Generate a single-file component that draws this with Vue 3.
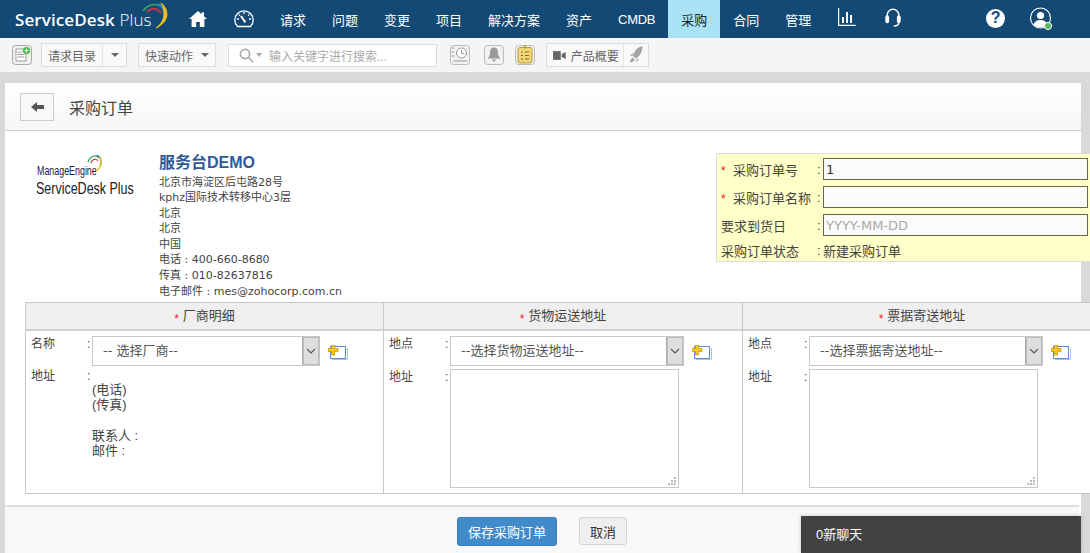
<script setup>
const navItems = ['请求','问题','变更','项目','解决方案','资产','CMDB','采购','合同','管理']
const addressLines = ['北京市海淀区后屯路28号','kphz国际技术转移中心3层','北京','北京','中国','电话 : 400-660-8680','传真 : 010-82637816','电子邮件 : mes@zohocorp.com.cn']
const orderFields = [
  { label: '采购订单号', required: true, value: '1', placeholder: '' },
  { label: '采购订单名称', required: true, value: '', placeholder: '' },
  { label: '要求到货日', required: false, value: '', placeholder: 'YYYY-MM-DD' },
]
const columns = [
  { title: '货物运送地址', option: '--选择货物运送地址--' },
  { title: '票据寄送地址', option: '--选择票据寄送地址--' },
]
</script>

<template>
  <div class="page">
    <header class="topbar">
      <div class="brand">
        <span class="brand-text">ServiceDesk <span class="brand-light">Plus</span></span>
        <svg class="brand-arc" width="28" height="28" viewBox="0 0 28 28" fill="none">
          <path d="M1 9C5 3 12 1 18 4" stroke="#2a9d5c" stroke-width="1.800"/>
          <path d="M5 10C8 6 15 5 19 11" stroke="#c8324a" stroke-width="1.800"/>
          <path d="M16 2C22 5 24 13 21 20" stroke="#2b7fc4" stroke-width="2"/>
          <path d="M19 1C28 8 27 20 14 26C22 21 25 10 19 1Z" fill="#f2c018" stroke="#f2c018"/>
        </svg>
      </div>
      <svg class="ico-home" width="18" height="16" viewBox="0 0 18 16"><path d="M9 0L0 8h2.600v8h4.600v-5h3.600v5h4.600V8H18l-3-2.700V1.200h-2.300v2L9 0z" fill="#fff"/></svg>
      <svg class="ico-gauge" width="20" height="18" viewBox="0 0 20 18" fill="none" stroke="#fff" stroke-width="1.300"><path d="M3.500 16.500A9.200 9.200 0 1 1 16.500 16.500Z"/><path d="M7 6l4.400 6.400" stroke-width="2"/><path d="M10 2v2M3 9h2M15 9h2M4.600 4.400l1.300 1.300M15.400 4.400l-1.300 1.300"/></svg>
      <nav class="nav">
        <a v-for="item in navItems" :key="item" class="nav-item" :class="{ active: item === '采购', latin: item === 'CMDB' }">{{ item }}</a>
      </nav>
      <svg class="ico-chart" width="18" height="18" viewBox="0 0 18 18" fill="none" stroke="#fff"><path d="M.6 0v17.400h17" stroke-width="1.200"/><path d="M5 9v6M9 4v11M13 7v8" stroke-width="2"/></svg>
      <svg class="ico-head" width="16" height="19" viewBox="0 0 16 19" fill="none" stroke="#fff" stroke-width="1.400"><path d="M2.200 9V7a5.800 5.800 0 0 1 11.600 0v2"/><rect x="1" y="8" width="2.400" height="6.500" rx="1.200" fill="#fff"/><rect x="12.600" y="8" width="2.400" height="6.500" rx="1.200" fill="#fff"/><path d="M13.800 14.500c0 2.500-2 3.500-5 3.500"/></svg>
      <span class="help">?</span>
      <svg class="ico-user" width="23" height="24" viewBox="0 0 23 24" fill="none"><circle cx="10.500" cy="11" r="10" stroke="#fff" stroke-width="1.100"/><circle cx="10.500" cy="8.500" r="3.600" fill="#fff"/><path d="M3.500 18c1-4 4-5 7-5s6 1 7 5c-4 3-10 3-14 0z" fill="#fff"/><circle cx="18" cy="19" r="3.600" fill="#5cb85c" stroke="#fff"/></svg>
    </header>

    <div class="toolbar">
      <svg class="tool-new" width="20" height="20" viewBox="0 0 20 20" fill="none"><rect x="0.500" y="0.500" width="19" height="19" rx="3" fill="#f0f0f0" stroke="#aaa"/><path d="M4 4h10v12H4z" fill="#fff" stroke="#888" stroke-width=".8"/><path d="M5.500 7h5M5.500 9.500h7M5.500 12h7" stroke="#888" stroke-width=".8"/><circle cx="14.500" cy="5.500" r="3.600" fill="#4cb648"/><path d="M14.500 3.500v4M12.500 5.500h4" stroke="#fff" stroke-width="1.200"/></svg>
      <div class="tool-btn catalog"><span class="tool-label">请求目录</span><span class="split"><i class="caret"></i></span></div>
      <div class="tool-btn quick"><span class="tool-label">快速动作</span><i class="caret"></i></div>
      <div class="search">
        <svg width="15" height="15" viewBox="0 0 15 15" fill="none" stroke="#aaa" stroke-width="1.700"><circle cx="6" cy="6" r="4.600"/><path d="M9.500 9.500L14 14"/></svg>
        <i class="caret small"></i>
        <span class="search-text">输入关键字进行搜索...</span>
      </div>
      <svg class="tool-icon first" width="20" height="20" viewBox="0 0 20 20" fill="none"><rect x=".5" y=".5" width="19" height="19" rx="3" fill="#f2f2f2" stroke="#bbb"/><circle cx="11.500" cy="8" r="5" fill="#fff" stroke="#999"/><path d="M11.500 5v3.400h3M1.500 3h3M1.500 7h2.500M1.500 11h3M3 16h14" stroke="#999"/></svg>
      <svg class="tool-icon" width="20" height="20" viewBox="0 0 20 20" fill="none"><rect x=".5" y=".5" width="19" height="19" rx="3" fill="#f2f2f2" stroke="#bbb"/><path d="M10 2.500c-3 0-3.800 2.300-3.800 4.500 0 3.500-1.400 5-2.400 6.500h12.400c-1-1.500-2.400-3-2.400-6.500 0-2.200-.8-4.500-3.800-4.500zM7.800 14.500h4.400L10 17z" fill="#9a9a9a"/></svg>
      <svg class="tool-icon note" width="20" height="20" viewBox="0 0 20 20" fill="none"><rect x=".5" y=".5" width="19" height="19" rx="3" fill="#f2f2f2" stroke="#bbb"/><rect x="3" y="2.500" width="14" height="15.500" rx="2" fill="#f2d675" stroke="#b59a3a"/><path d="M10 .5v3" stroke="#b59a3a" stroke-width="2"/><path d="M6 7h2M10 7h4M6 10.500h2M10 10.500h4M6 14h2M10 14h4" stroke="#7a6a2a"/></svg>
      <div class="tool-btn product">
        <svg width="13" height="9" viewBox="0 0 13 9"><rect width="8" height="9" fill="#666"/><path d="M9 3l4-2v7l-4-2z" fill="#666"/></svg>
        <span class="tool-label">产品概要</span>
        <span class="rocket-box"><svg width="14" height="18" viewBox="0 0 14 18"><path d="M13.500 0C9 1 5 4.500 4 10l2.500 2.500C11 10.500 13.500 6 13.500 0zM4 7L1 9.500l2.500.8zM8 12.500l-1 4 2.800-3zM3.500 11.500c-1.500 1-2.500 3-2.500 5 2-.2 4-1.200 5-2.800z" fill="#a5a5a5"/></svg></span>
      </div>
    </div>

    <main class="panel">
      <div class="titlebar">
        <button class="back" type="button"><svg width="13" height="10" viewBox="0 0 13 10"><path d="M0 5l6-5v3h7v4H6v3z" fill="#555"/></svg></button>
        <h1 class="title">采购订单</h1>
      </div>

      <section class="org">
        <div class="org-logo">
          <div class="me-line"><span class="squeeze me">ManageEngine</span>
            <svg class="me-arc" width="16" height="20" viewBox="0 0 16 20" fill="none"><path d="M1 8C3 2 9 0 12 4" stroke="#2a9d5c" stroke-width="1.300"/><path d="M4 9C5 5 9 4 11 7" stroke="#c8324a" stroke-width="1.200"/><path d="M10 1c4 2 5 7 3 11" stroke="#2b7fc4" stroke-width="1.300"/><path d="M12 3c4 5 2 11-3 14" stroke="#f2c018" stroke-width="1.300"/></svg>
          </div>
          <div class="sdp-line"><span class="squeeze sdp">ServiceDesk Plus</span></div>
        </div>
        <div class="org-info">
          <div class="org-name">服务台DEMO</div>
          <div v-for="line in addressLines" :key="line" class="org-line">{{ line }}</div>
        </div>
        <div class="order-box">
          <div v-for="f in orderFields" :key="f.label" class="order-row">
            <span class="order-label"><i v-if="f.required" class="star">*</i>{{ f.label }}</span>
            <span class="order-colon">:</span>
            <input class="order-input" :value="f.value" :placeholder="f.placeholder" />
          </div>
          <div class="order-row status">
            <span class="order-label">采购订单状态</span>
            <span class="order-colon">:</span>
            <span class="order-value">新建采购订单</span>
          </div>
        </div>
      </section>

      <section class="grid">
        <div class="col vendor">
          <div class="col-head"><i class="star">*</i> 厂商明细</div>
          <div class="col-body">
            <div class="field">
              <span class="f-label">名称</span><span class="f-colon">:</span>
              <div class="select w-vendor"><span class="select-text">-- 选择厂商--</span><span class="select-arrow"><svg width="10" height="6" viewBox="0 0 10 6" fill="none" stroke="#555" stroke-width="1.100"><path d="M1 1l4 4 4-4"/></svg></span></div>
              <svg class="add" width="20" height="15" viewBox="0 0 20 15" fill="none"><rect x="2.500" y="1.500" width="15" height="12" fill="#fff" stroke="#5b8bd0"/><path d="M4 14.500h15.500V3" stroke="#a9c3e8"/><path d="M3.500 0h3v3.500H10v3H6.500V10h-3V6.500H0v-3h3.500z" fill="#f7c81e" stroke="#c8960c" stroke-width=".8"/></svg>
            </div>
            <div class="field second">
              <span class="f-label">地址</span><span class="f-colon">:</span>
              <div class="vendor-info">
                <div>(电话)</div>
                <div>(传真)</div>
                <div class="gap">联系人 :</div>
                <div>邮件 :</div>
              </div>
            </div>
          </div>
        </div>
        <div v-for="(c, i) in columns" :key="c.title" class="col" :class="i === 0 ? 'ship' : 'bill'">
          <div class="col-head"><i class="star">*</i> {{ c.title }}</div>
          <div class="col-body">
            <div class="field">
              <span class="f-label">地点</span><span class="f-colon">:</span>
              <div class="select w-addr"><span class="select-text">{{ c.option }}</span><span class="select-arrow"><svg width="10" height="6" viewBox="0 0 10 6" fill="none" stroke="#555" stroke-width="1.100"><path d="M1 1l4 4 4-4"/></svg></span></div>
              <svg class="add" width="20" height="15" viewBox="0 0 20 15" fill="none"><rect x="2.500" y="1.500" width="15" height="12" fill="#fff" stroke="#5b8bd0"/><path d="M4 14.500h15.500V3" stroke="#a9c3e8"/><path d="M3.500 0h3v3.500H10v3H6.500V10h-3V6.500H0v-3h3.500z" fill="#f7c81e" stroke="#c8960c" stroke-width=".8"/></svg>
            </div>
            <div class="field third">
              <span class="f-label">地址</span><span class="f-colon">:</span>
              <div class="area-wrap">
                <textarea class="area"></textarea>
                <svg class="grip" width="8" height="8" viewBox="0 0 8 8" fill="#bbb"><rect x="6" y="0" width="2" height="2"/><rect x="3" y="3" width="2" height="2"/><rect x="6" y="3" width="2" height="2"/><rect x="0" y="6" width="2" height="2"/><rect x="3" y="6" width="2" height="2"/><rect x="6" y="6" width="2" height="2"/></svg>
              </div>
            </div>
          </div>
        </div>
      </section>

      <footer class="actions">
        <button class="btn primary" type="button">保存采购订单</button>
        <button class="btn" type="button">取消</button>
      </footer>
    </main>

    <div class="chat">0新聊天</div>
  </div>
</template>

<style>
html, body { margin: 0; overflow: hidden; }
</style>

<style scoped>
.page { position: relative; width: 1090px; height: 553px; overflow: hidden; background: #d9d9d9; font-family: "Liberation Sans", "Noto Sans CJK SC", sans-serif; font-size: 12px; color: #444; }
.topbar { display: flex; align-items: center; height: 38px; background: #134a75; color: #fff; }
.brand { position: relative; width: 189px; flex: none; }
.brand-text { margin-left: 15px; font-family: "Open Sans", sans-serif; font-size: 17px; font-weight: 600; letter-spacing: .1px; }
.brand-light { font-weight: 300; }
.brand-arc { position: absolute; left: 142px; top: -6px; }
.ico-home { flex: none; }
.ico-gauge { flex: none; margin-left: 27px; }
.nav { display: flex; margin-left: 13px; height: 38px; }
.nav-item { display: flex; align-items: center; padding: 0 13px; font-size: 13px; color: #fff; }
.nav-item.latin { letter-spacing: -.3px; }
.nav-item.active { background: #a8e2f5; color: #222; }
.ico-chart { flex: none; margin-left: 14px; margin-bottom: 5px; }
.ico-head { flex: none; margin-left: 29px; margin-bottom: 3px; }
.help { flex: none; display: flex; align-items: center; justify-content: center; width: 19px; height: 19px; margin-left: 85px; margin-bottom: 2px; border-radius: 50%; background: #fff; color: #134a75; font-weight: 700; font-size: 16px; }
.ico-user { flex: none; margin-left: 25px; }

.toolbar { display: flex; align-items: center; height: 34px; background: #f5f5f5; padding-left: 12px; box-sizing: border-box; }
.tool-new { flex: none; }
.tool-btn { display: flex; align-items: center; height: 24px; box-sizing: border-box; border: 1px solid #ddd; background: #f9f9f9; color: #666; }
.tool-label { white-space: nowrap; }
.catalog { width: 86px; margin-left: 9px; padding-left: 6px; }
.split { display: flex; align-items: center; justify-content: center; width: 25px; height: 22px; margin-left: 6px; border-left: 1px solid #e6e6e6; }
.quick { width: 78px; margin-left: 11px; padding-left: 6px; }
.quick .caret { margin-left: 8px; }
.caret { display: block; width: 0; height: 0; border-left: 4px solid transparent; border-right: 4px solid transparent; border-top: 4px solid #666; }
.caret.small { border-top-color: #aaa; margin: 0 5px 0 2px; border-left-width: 3.500px; border-right-width: 3.500px; }
.search { display: flex; align-items: center; width: 209px; height: 23px; box-sizing: border-box; margin-left: 12px; padding-left: 10px; border: 1px solid #ddd; background: #fff; color: #aaa; }
.search-text { white-space: nowrap; margin-left: 2px; }
.tool-icon { flex: none; margin-left: 14px; }
.tool-icon.first { margin-left: 13px; }
.tool-icon.note { margin-left: 11px; }
.product { width: 103px; margin-left: 11px; padding-left: 6px; }
.product .tool-label { margin-left: 5px; }
.rocket-box { display: flex; align-items: center; justify-content: center; height: 22px; width: 25px; margin-left: 4px; border-left: 1px solid #e6e6e6; }

.panel { width: 1076px; margin: 11px 0 0 5px; background: #fff; }
.titlebar { display: flex; align-items: center; height: 47px; padding-left: 15px; border-bottom: 1px solid #ccc; background: linear-gradient(#fff, #f6f6f6); }
.back { display: flex; align-items: center; justify-content: center; width: 34px; height: 28px; padding: 0; border: 1px solid #ccc; background: #f8f8f8; }
.title { margin: 0 0 0 15px; font-size: 16px; font-weight: 400; color: #444; }

.org { display: flex; height: 171px; }
.org-logo { width: 123px; padding: 27px 0 0 31px; flex: none; color: #222; }
.me-line { position: relative; font-family: "Liberation Sans", sans-serif; font-size: 12px; line-height: 16px; margin-top: 5px; white-space: nowrap; }
.me-arc { position: absolute; left: 51px; top: -9px; }
.sdp-line { font-family: "Liberation Sans", sans-serif; font-size: 16px; line-height: 18px; margin-top: 1px; white-space: nowrap; }
.squeeze { display: inline-block; transform-origin: left center; }
.squeeze.me { transform: scaleX(.74); margin-left: 1px; }
.squeeze.sdp { transform: scaleX(.78); }
.org-info { flex: none; width: 420px; padding-top: 21px; font-family: "DejaVu Sans", "Noto Sans CJK SC", sans-serif; font-size: 11px; line-height: 15.600px; color: #444; }
.org-name { font-family: "Liberation Sans", "Noto Sans CJK SC", sans-serif; font-size: 16px; font-weight: 700; line-height: 22.500px; color: #2f5a99; }
.org-line { white-space: nowrap; }
.order-box { flex: none; width: 400px; height: 109px; box-sizing: border-box; margin: 22px 0 0 137px; padding: 4px 0 0 4px; background: #ffffc8; border: 1px solid #ddd; font-size: 13px; }
.order-row { display: flex; align-items: center; height: 22px; margin-bottom: 6px; }
.order-label { position: relative; width: 96px; white-space: nowrap; flex: none; }
.order-row:has(.star) .order-label { padding-left: 12px; width: 84px; }
.order-label .star { position: absolute; left: 0; top: 4px; }
.order-colon { width: 6px; flex: none; }
.order-input { width: 265px; height: 22px; box-sizing: border-box; padding: 0 2px; border: 1px solid #666644; background: #fbfbfb; font-family: "DejaVu Sans", sans-serif; font-size: 13px; color: #234; outline: none; }
.order-input::placeholder { color: #aaa; }
.order-row.status { margin-top: -3px; }
.star { position: relative; top: 3px; font-style: normal; color: #e8202a; font-size: 12px; }

.grid { display: flex; width: 1075px; height: 192px; margin-left: 20px; box-sizing: border-box; border: 1px solid #c8c8c8; background: #fff; }
.col { flex: none; width: 359px; box-sizing: border-box; border-left: 1px solid #c8c8c8; }
.col.vendor { border-left: 0; width: 357px; }
.col-head { height: 26px; line-height: 26px; text-align: center; background: #efefef; border-bottom: 2px solid #d0d0d0; font-size: 13px; color: #444; }
.col-body { padding: 5px 0 0 5px; }
.field { display: flex; align-items: flex-start; }
.f-label { width: 56px; flex: none; font-size: 12px; line-height: 14px; padding-top: 1px; }
.f-colon { width: 5px; flex: none; line-height: 14px; padding-top: 1px; }
.select { display: flex; flex: none; height: 30px; box-sizing: border-box; border: 1px solid #c8c8c8; background: #fff; }
.w-vendor { width: 228px; }
.w-addr { width: 234px; }
.select-text { flex: 1; padding-left: 10px; line-height: 27px; font-family: "DejaVu Sans", "Noto Sans CJK SC", sans-serif; font-size: 13px; color: #555; white-space: nowrap; }
.select-arrow { display: flex; align-items: center; justify-content: center; width: 16px; background: #dedede; border-left: 1px solid #aaa; box-shadow: inset 0 0 0 1px #bbb; }
.add { flex: none; margin: 9px 0 0 8px; }
.second { margin-top: 2px; }
.vendor-info { line-height: 15px; padding-top: 14px; color: #444; font-size: 13px; }
.gap { margin-top: 16px; }
.third { margin-top: 3px; }
.area-wrap { position: relative; width: 229px; height: 119px; }
.area { display: block; width: 229px; height: 119px; box-sizing: border-box; border: 1px solid #c8c8c8; background: #fff; resize: none; outline: none; padding: 0; }
.grip { position: absolute; right: 3px; bottom: 3px; }

.actions { display: flex; height: 48px; margin: 11px 2px 0 0; padding: 10px 0 0 452px; border-top: 2px solid #dfdfd9; background: #f8f8fa; box-sizing: border-box; }
.btn { width: 48px; height: 28px; padding: 0; border: 1px solid #d4d4d4; border-radius: 3px; background: #efefef; font: inherit; font-size: 13px; color: #333; margin-left: 22px; }
.btn.primary { width: 100px; height: 29px; margin-left: 0; background: #428bca; border-color: #3b80bb; color: #fff; }

.chat { position: absolute; right: 9px; bottom: 0; width: 280px; height: 37px; box-sizing: border-box; padding: 0 0 0 15px; line-height: 38px; background: #424242; color: #fff; font-size: 13px; box-shadow: 0 0 4px rgba(0,0,0,.2); }
</style>
